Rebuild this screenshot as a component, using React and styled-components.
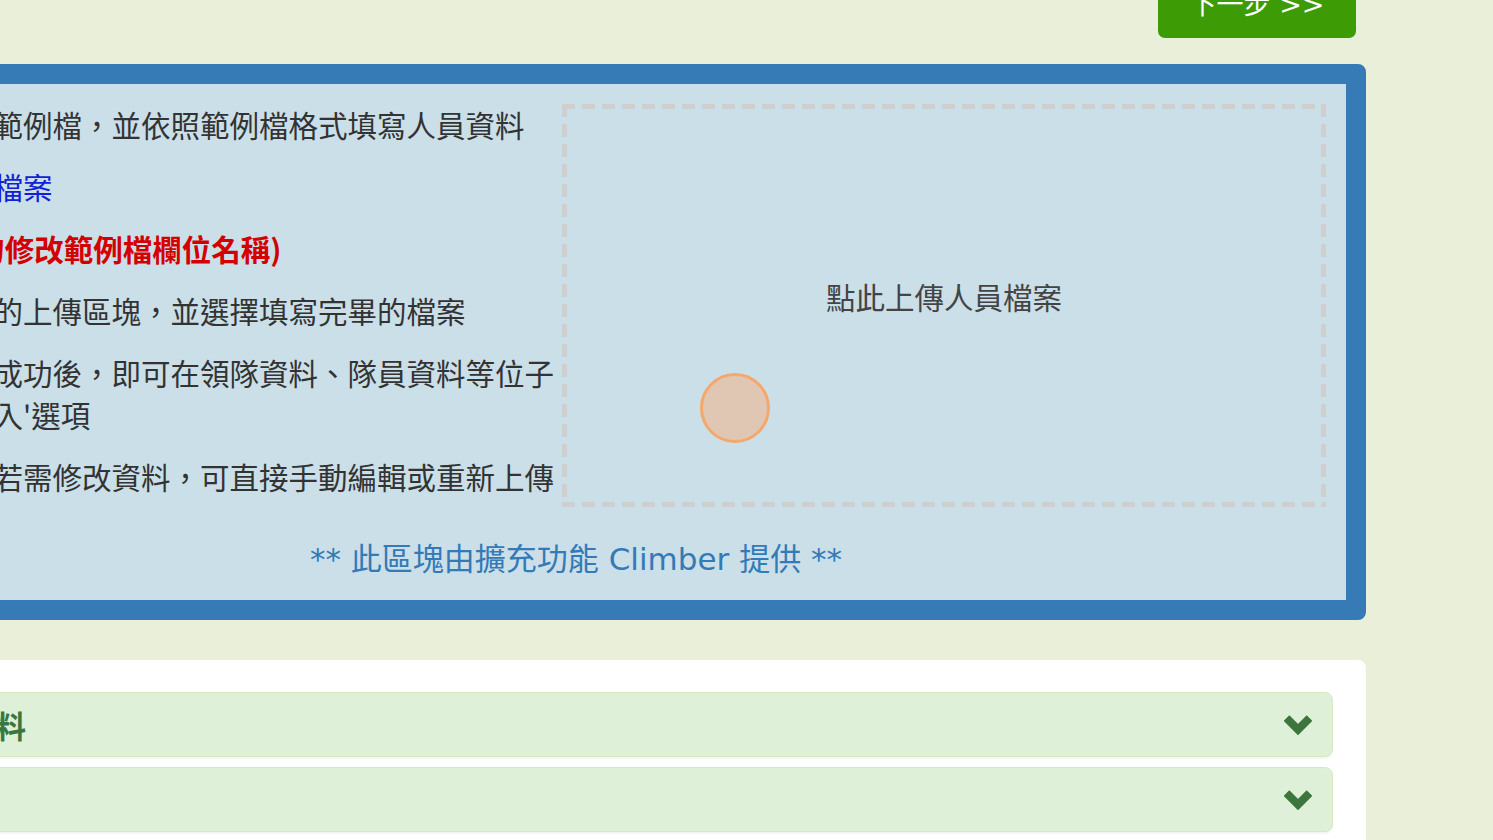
import styled, { createGlobalStyle } from 'styled-components'

const GlobalStyle = createGlobalStyle`
  html, body {
    margin: 0;
    background: #e9efd8;
    overflow: hidden;
  }
  body {
    font-family: "Noto Sans CJK TC", "Noto Sans CJK SC", sans-serif;
    color: #333;
  }
`

const Page = styled.div`
  width: 1580px;
  margin-left: -214px;
  margin-top: -33px;
`

const TopBar = styled.div`
  display: flex;
  justify-content: flex-end;
  padding-right: 10px;
`

const NextButton = styled.button`
  width: 198px;
  height: 71px;
  border: 0;
  border-radius: 7px;
  background: #3d9b06;
  color: #fff;
  font-family: "DejaVu Sans", "Noto Sans CJK TC", sans-serif;
  font-size: 27px;
  cursor: pointer;
`

const ImportPanel = styled.section`
  margin-top: 26px;
  border: 20px solid #377bb6;
  border-radius: 8px;
  background: #cadfe8;
  padding: 20px;
`

const ImportGrid = styled.div`
  display: grid;
  grid-template-columns: 734px 764px;
  column-gap: 2px;
  align-items: start;
`

const Steps = styled.div`
  padding-left: 20px;
  font-size: 29.5px;
  line-height: 41.5px;
`

const Step = styled.p`
  margin: 0 0 20.5px;
  color: ${(p) => (p.$warn ? '#d40000' : '#333')};
  font-weight: ${(p) => (p.$warn ? 700 : 400)};

  &:last-child {
    margin-bottom: 0;
  }
`

const StepLink = styled.a`
  color: #1022d6;
  text-decoration: none;
`

const DropZone = styled.div`
  position: relative;
  height: 403px;
  box-sizing: border-box;
  padding-bottom: 19px;
  display: flex;
  align-items: center;
  justify-content: center;
  font-size: 29.5px;
  color: #444;
  cursor: pointer;
  background-image:
    repeating-linear-gradient(90deg, #cfcfcf 0 13px, transparent 13px 20px),
    repeating-linear-gradient(90deg, #cfcfcf 0 13px, transparent 13px 20px),
    repeating-linear-gradient(180deg, #cfcfcf 0 13px, transparent 13px 20px),
    repeating-linear-gradient(180deg, #cfcfcf 0 13px, transparent 13px 20px);
  background-size: 100% 5px, 100% 5px, 5px 100%, 5px 100%;
  background-position: 0 0, 0 100%, 0 0, 100% 0;
  background-repeat: no-repeat;
`

// touch / click indicator drawn over the drop zone
const ClickMark = styled.span`
  position: absolute;
  left: 138px;
  top: 269px;
  width: 70px;
  height: 70px;
  box-sizing: border-box;
  border-radius: 50%;
  border: 3px solid #f5a86c;
  background: rgba(255, 166, 108, 0.42);
`

const Credit = styled.p`
  margin: 0;
  text-align: center;
  font-family: "DejaVu Sans", "Noto Sans CJK TC", sans-serif;
  font-size: 31px;
  line-height: 41.5px;
  color: #337ab7;
`

const Card = styled.section`
  margin-top: 40px;
  background: #fff;
  border-radius: 8px;
  padding: 32px 33px;
`

const AccordionHead = styled.div`
  display: flex;
  align-items: center;
  justify-content: space-between;
  height: 65px;
  box-sizing: border-box;
  padding: 0 20px;
  margin-bottom: 10px;
  border: 1px solid #d6e9c6;
  border-radius: 8px;
  background: #dff0d8;
  color: #3c763d;
  box-shadow: 0 2px 1px rgba(0, 0, 0, 0.04);
`

const AccordionTitle = styled.h4`
  margin: 0;
  font-size: 31px;
  font-weight: 600;
`

const Chevron = () => (
  <svg width="28" height="22" viewBox="0 0 28 22">
    <polyline
      points="2.5,4 14,15.5 25.5,4"
      fill="none"
      stroke="#3c763d"
      strokeWidth="8"
      strokeLinejoin="miter"
    />
  </svg>
)

const sections = ['領隊基本資料', '隊員名單']

export default function App() {
  return (
    <>
      <GlobalStyle />
      <Page>
        <TopBar>
          <NextButton>下一步 &gt;&gt;</NextButton>
        </TopBar>

        <ImportPanel>
          <ImportGrid>
            <Steps>
              <Step>首先請下載範例檔，並依照範例檔格式填寫人員資料</Step>
              <Step>
                <StepLink href="#">點這裡下載檔案</StepLink>
              </Step>
              <Step $warn>(注意：請勿修改範例檔欄位名稱)</Step>
              <Step>請點擊右方的上傳區塊，並選擇填寫完畢的檔案</Step>
              <Step>待檔案上傳成功後，即可在領隊資料、隊員資料等位子處，點選匯入'選項</Step>
              <Step>資料匯入後若需修改資料，可直接手動編輯或重新上傳即可。</Step>
            </Steps>
            <DropZone>
              點此上傳人員檔案
              <ClickMark />
            </DropZone>
          </ImportGrid>
          <Credit>** 此區塊由擴充功能 Climber 提供 **</Credit>
        </ImportPanel>

        <Card>
          {sections.map((title) => (
            <AccordionHead key={title}>
              <AccordionTitle>{title}</AccordionTitle>
              <Chevron />
            </AccordionHead>
          ))}
        </Card>
      </Page>
    </>
  )
}
